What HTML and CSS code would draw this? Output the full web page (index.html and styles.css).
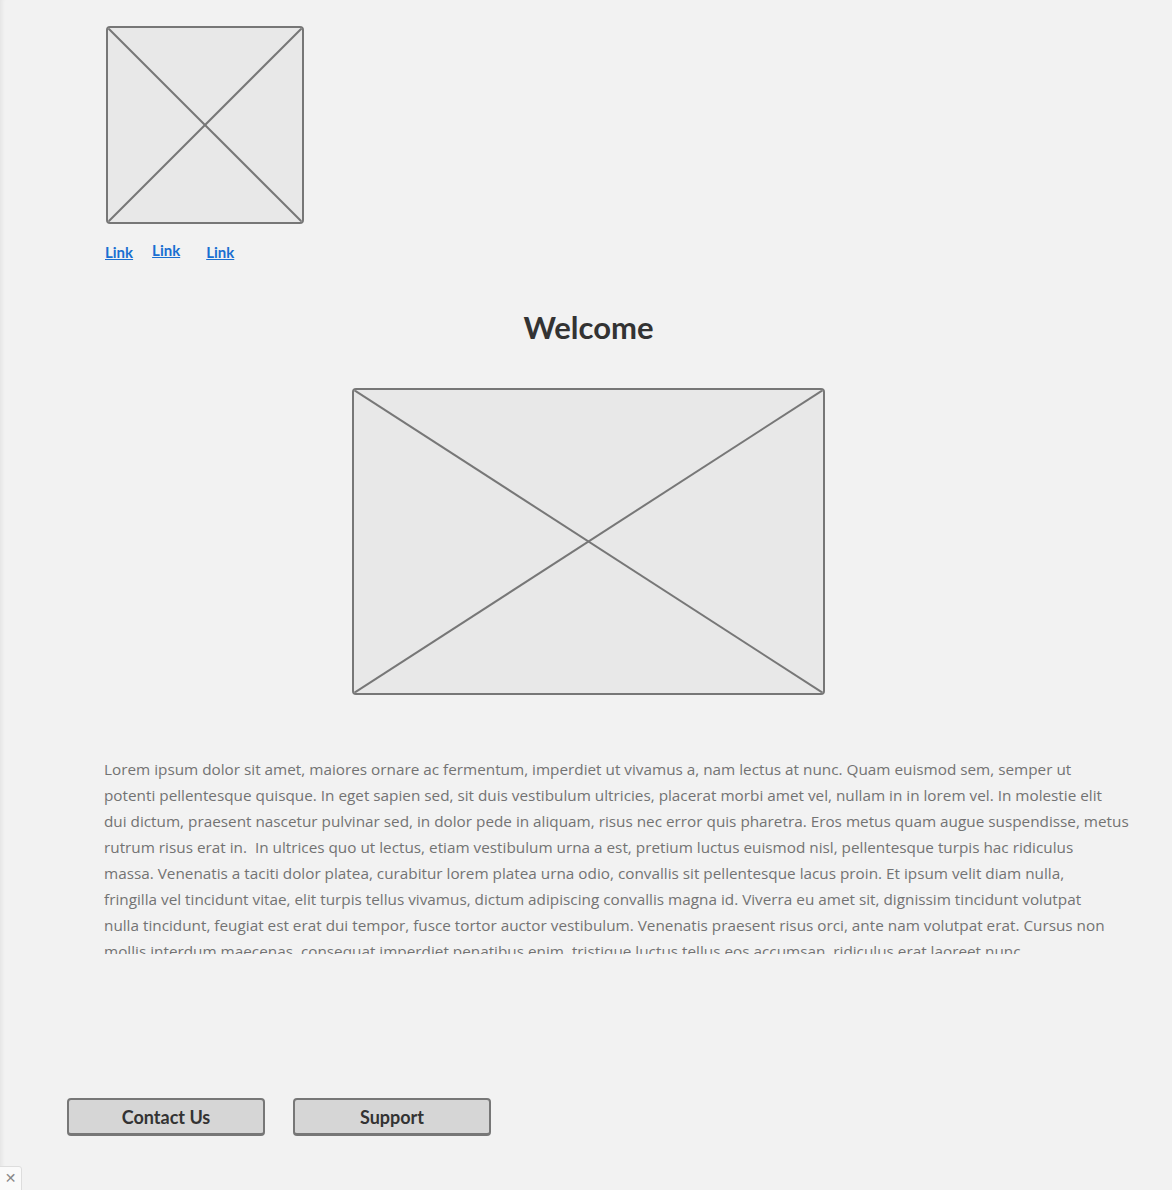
FILE: index.html
```html
<!DOCTYPE html>
<html>
<head>
<meta charset="utf-8">
<link rel="stylesheet" href="styles.css">
</head>
<body>
<div class="page">
  <header class="header">
    <div class="placeholder logo">
      <svg viewBox="0 0 100 100" preserveAspectRatio="none"><line x1="0" y1="0" x2="100" y2="100" vector-effect="non-scaling-stroke"/><line x1="100" y1="0" x2="0" y2="100" vector-effect="non-scaling-stroke"/></svg>
    </div>
    <nav class="nav">
      <a href="#" class="l1">Link</a>
      <a href="#" class="l2">Link</a>
      <a href="#" class="l3">Link</a>
    </nav>
  </header>
  <main class="main">
    <h1 class="title">Welcome</h1>
    <div class="placeholder hero">
      <svg viewBox="0 0 100 100" preserveAspectRatio="none"><line x1="0" y1="0" x2="100" y2="100" vector-effect="non-scaling-stroke"/><line x1="100" y1="0" x2="0" y2="100" vector-effect="non-scaling-stroke"/></svg>
    </div>
    <p class="body-text">Lorem ipsum dolor sit amet, maiores ornare ac fermentum, imperdiet ut vivamus a, nam lectus at nunc. Quam euismod sem, semper ut<br>potenti pellentesque quisque. In eget sapien sed, sit duis vestibulum ultricies, placerat morbi amet vel, nullam in in lorem vel. In molestie elit<br>dui dictum, praesent nascetur pulvinar sed, in dolor pede in aliquam, risus nec error quis pharetra. Eros metus quam augue suspendisse, metus<br>rutrum risus erat in.&nbsp; In ultrices quo ut lectus, etiam vestibulum urna a est, pretium luctus euismod nisl, pellentesque turpis hac ridiculus<br>massa. Venenatis a taciti dolor platea, curabitur lorem platea urna odio, convallis sit pellentesque lacus proin. Et ipsum velit diam nulla,<br>fringilla vel tincidunt vitae, elit turpis tellus vivamus, dictum adipiscing convallis magna id. Viverra eu amet sit, dignissim tincidunt volutpat<br>nulla tincidunt, feugiat est erat dui tempor, fusce tortor auctor vestibulum. Venenatis praesent risus orci, ante nam volutpat erat. Cursus non<br>mollis interdum maecenas, consequat imperdiet penatibus enim, tristique luctus tellus eos accumsan, ridiculus erat laoreet nunc.</p>
  </main>
  <footer class="footer">
    <button class="btn">Contact Us</button>
    <button class="btn">Support</button>
  </footer>
</div>
<div class="close">&#x2715;</div>
</body>
</html>
```
FILE: styles.css
```css
html, body {
  margin: 0;
  padding: 0;
}
body {
  width: 1172px;
  height: 1190px;
  overflow: hidden;
  background: #f2f2f2;
  font-family: Lato, "Open Sans", sans-serif;
  position: relative;
  box-shadow: inset 5px 0 4px -3px rgba(0,0,0,0.06);
}
.page {
  display: flex;
  flex-direction: column;
}
.header {
  padding: 26px 0 0 106px;
  display: flex;
  flex-direction: column;
}
.placeholder {
  box-sizing: border-box;
  border: 2px solid #777;
  border-radius: 4px;
  background: #e8e8e8;
  overflow: hidden;
}
.placeholder svg {
  display: block;
  width: 100%;
  height: 100%;
}
.placeholder line {
  stroke: #777;
  stroke-width: 2;
}
.logo {
  width: 198px;
  height: 198px;
}
.nav {
  display: flex;
  margin-top: 17px;
  margin-left: -1px;
  height: 20px;
  align-items: flex-start;
}
.nav a {
  font-size: 15px;
  font-weight: 700;
  color: #1a6fd1;
  text-decoration: underline;
  line-height: 18px;
}
.nav .l1 { margin-top: 2px; }
.nav .l2 { margin-left: 19px; }
.nav .l3 { margin-left: 26px; margin-top: 2px; }
.main {
  display: flex;
  flex-direction: column;
  align-items: center;
  padding-left: 5px;
}
.title {
  margin: 48px 0 0 0;
  font-size: 31px;
  line-height: 36px;
  font-weight: 700;
  color: #333;
}
.hero {
  margin-top: 43px;
  width: 473px;
  height: 307px;
}
.body-text {
  align-self: flex-start;
  margin: 61px 0 0 99px;
  font-family: "Open Sans", Lato, sans-serif;
  font-size: 15.3px;
  line-height: 26px;
  color: #737373;
  white-space: nowrap;
  height: 198px;
  overflow: hidden;
}
.footer {
  display: flex;
  gap: 28px;
  padding-left: 67px;
  margin-top: 144px;
}
.btn {
  box-sizing: border-box;
  width: 198px;
  height: 38px;
  background: #d6d6d6;
  border: 2px solid #777;
  border-bottom-width: 3px;
  border-radius: 4px;
  font-family: Lato, "Open Sans", sans-serif;
  font-size: 18px;
  font-weight: 700;
  color: #333;
  padding: 0;
}
.close {
  position: absolute;
  left: -1px;
  top: 1166px;
  width: 23px;
  height: 25px;
  box-sizing: border-box;
  border: 1px solid #ddd;
  border-radius: 0 3px 0 0;
  background: #fafafa;
  color: #888;
  font-size: 14px;
  line-height: 23px;
  text-align: center;
  font-family: "DejaVu Sans", sans-serif;
}
```
